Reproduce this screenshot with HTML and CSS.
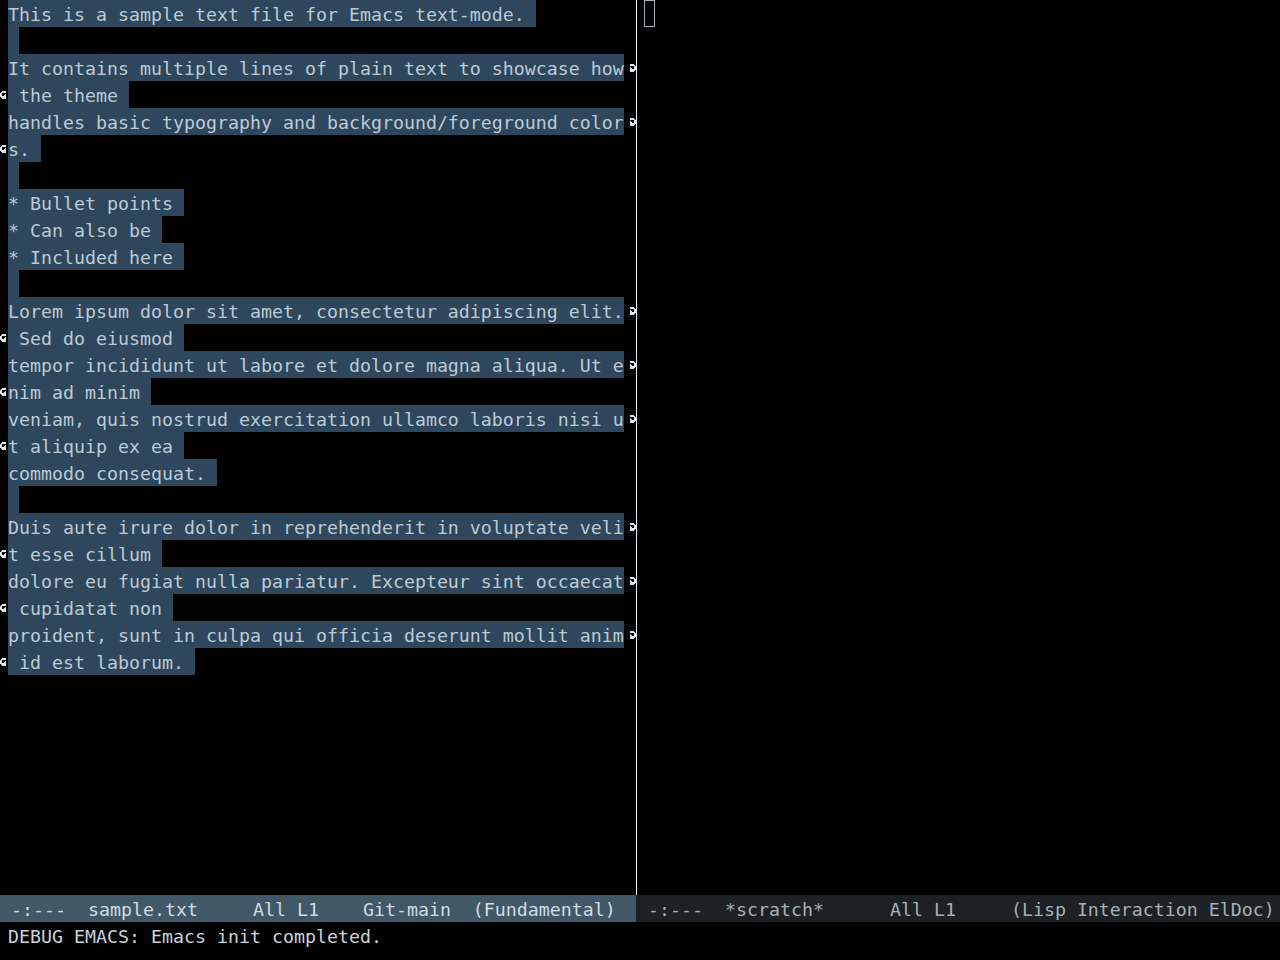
FILE: index.html
```html
<!doctype html>
<html lang="en">
  <head>
    <meta charset="UTF-8" />
    <title>Emacs - sample.txt</title>
    <link rel="stylesheet" href="styles.css">
  </head>
  <body>
    <svg class="defs" width="0" height="0">
      <symbol id="larr" viewBox="0 0 8 8">
        <path d="M2 0h4v1H2zM1 1h5v1H1zM0 2h2v1H0zM0 3h2v1H0zM5 3h1v1H5zM0 4h2v1H0zM4 4h2v1H4zM0 5h6v1H0zM1 6h5v1H1zM2 7h4v1H2z"/>
      </symbol>
      <symbol id="rarr" viewBox="0 0 8 8">
        <path d="M2 0h4v1H2zM2 1h5v1H2zM6 2h2v1H6zM6 3h2v1H6zM2 3h1v1H2zM6 4h2v1H6zM2 4h2v1H2zM2 5h6v1H2zM2 6h5v1H2zM2 7h4v1H2z"/>
      </symbol>
    </svg>

    <div class="frame">
      <div class="windows">
        <div class="window left">
          <div class="body">
            <div class="row"><span class="lf"></span><span class="txt"><span class="sel nl">This is a sample text file for Emacs text-mode.</span></span><span class="rf"></span></div>
            <div class="row"><span class="lf"></span><span class="txt"><span class="sel nl"></span></span><span class="rf"></span></div>
            <div class="row"><span class="lf"></span><span class="txt"><span class="sel">It contains multiple lines of plain text to showcase how</span></span><span class="rf"><svg><use href="#rarr"/></svg></span></div>
            <div class="row"><span class="lf"><svg><use href="#larr"/></svg></span><span class="txt"><span class="sel nl"> the theme</span></span><span class="rf"></span></div>
            <div class="row"><span class="lf"></span><span class="txt"><span class="sel">handles basic typography and background/foreground color</span></span><span class="rf"><svg><use href="#rarr"/></svg></span></div>
            <div class="row"><span class="lf"><svg><use href="#larr"/></svg></span><span class="txt"><span class="sel nl">s.</span></span><span class="rf"></span></div>
            <div class="row"><span class="lf"></span><span class="txt"><span class="sel nl"></span></span><span class="rf"></span></div>
            <div class="row"><span class="lf"></span><span class="txt"><span class="sel nl">* Bullet points</span></span><span class="rf"></span></div>
            <div class="row"><span class="lf"></span><span class="txt"><span class="sel nl">* Can also be</span></span><span class="rf"></span></div>
            <div class="row"><span class="lf"></span><span class="txt"><span class="sel nl">* Included here</span></span><span class="rf"></span></div>
            <div class="row"><span class="lf"></span><span class="txt"><span class="sel nl"></span></span><span class="rf"></span></div>
            <div class="row"><span class="lf"></span><span class="txt"><span class="sel">Lorem ipsum dolor sit amet, consectetur adipiscing elit.</span></span><span class="rf"><svg><use href="#rarr"/></svg></span></div>
            <div class="row"><span class="lf"><svg><use href="#larr"/></svg></span><span class="txt"><span class="sel nl"> Sed do eiusmod</span></span><span class="rf"></span></div>
            <div class="row"><span class="lf"></span><span class="txt"><span class="sel">tempor incididunt ut labore et dolore magna aliqua. Ut e</span></span><span class="rf"><svg><use href="#rarr"/></svg></span></div>
            <div class="row"><span class="lf"><svg><use href="#larr"/></svg></span><span class="txt"><span class="sel nl">nim ad minim</span></span><span class="rf"></span></div>
            <div class="row"><span class="lf"></span><span class="txt"><span class="sel">veniam, quis nostrud exercitation ullamco laboris nisi u</span></span><span class="rf"><svg><use href="#rarr"/></svg></span></div>
            <div class="row"><span class="lf"><svg><use href="#larr"/></svg></span><span class="txt"><span class="sel nl">t aliquip ex ea</span></span><span class="rf"></span></div>
            <div class="row"><span class="lf"></span><span class="txt"><span class="sel nl">commodo consequat.</span></span><span class="rf"></span></div>
            <div class="row"><span class="lf"></span><span class="txt"><span class="sel nl"></span></span><span class="rf"></span></div>
            <div class="row"><span class="lf"></span><span class="txt"><span class="sel">Duis aute irure dolor in reprehenderit in voluptate veli</span></span><span class="rf"><svg><use href="#rarr"/></svg></span></div>
            <div class="row"><span class="lf"><svg><use href="#larr"/></svg></span><span class="txt"><span class="sel nl">t esse cillum</span></span><span class="rf"></span></div>
            <div class="row"><span class="lf"></span><span class="txt"><span class="sel">dolore eu fugiat nulla pariatur. Excepteur sint occaecat</span></span><span class="rf"><svg><use href="#rarr"/></svg></span></div>
            <div class="row"><span class="lf"><svg><use href="#larr"/></svg></span><span class="txt"><span class="sel nl"> cupidatat non</span></span><span class="rf"></span></div>
            <div class="row"><span class="lf"></span><span class="txt"><span class="sel">proident, sunt in culpa qui officia deserunt mollit anim</span></span><span class="rf"><svg><use href="#rarr"/></svg></span></div>
            <div class="row"><span class="lf"><svg><use href="#larr"/></svg></span><span class="txt"><span class="sel nl"> id est laborum.</span></span><span class="rf"></span></div>
          </div>
          <div class="modeline active">-:---  sample.txt     All L1    Git-main  (Fundamental)</div>
        </div>

        <div class="window right">
          <div class="body">
            <div class="row"><span class="lf"></span><span class="txt"><span class="cursor"></span></span></div>
          </div>
          <div class="modeline inactive">-:---  *scratch*      All L1     (Lisp Interaction ElDoc)</div>
        </div>
      </div>

      <div class="echo">DEBUG EMACS: Emacs init completed.</div>
    </div>
  </body>
</html>
```

FILE: styles.css
```css
body {
  margin: 0;
  background: #000;
  color: #bccad5;
  font-family: "DejaVu Sans Mono", monospace;
  font-size: 18.27px;
  line-height: 27px;
}
.defs {
  position: absolute;
}
.frame {
  width: 1280px;
  height: 960px;
  display: flex;
  flex-direction: column;
  overflow: hidden;
}
.windows {
  display: flex;
  height: 922px;
}
.window {
  display: flex;
  flex-direction: column;
}
.window.left {
  width: 636px;
}
.window.right {
  flex: 1;
}
.body {
  flex: 1;
  overflow: hidden;
}
.right .body {
  border-left: 1px solid #e4ecf1;
}
.row {
  display: flex;
  height: 27px;
}
.lf {
  width: 8px;
  flex: none;
  display: flex;
  align-items: center;
}
.right .lf {
  width: 7px;
}
.txt {
  width: 620px;
  flex: none;
  white-space: pre;
  line-height: 29px;
}
.rf {
  width: 8px;
  flex: none;
  display: flex;
  align-items: center;
}
.lf svg,
.rf svg {
  width: 8px;
  height: 8px;
  fill: #dde8f0;
}
.sel {
  display: inline-block;
  height: 27px;
  vertical-align: top;
  background: #2e475c;
}
.sel.nl {
  padding-right: 11px;
}
.cursor {
  display: inline-block;
  box-sizing: border-box;
  width: 11px;
  height: 27px;
  vertical-align: top;
  border: 1px solid #a3adb5;
}

/* mode lines */
.modeline {
  height: 27px;
  line-height: 29px;
  white-space: pre;
  flex: none;
  overflow: hidden;
}
.modeline.active {
  background: #405868;
  color: #d2dce3;
  padding-left: 11px;
}
.modeline.inactive {
  background: #1d2024;
  color: #a6b0b8;
  padding-left: 12px;
}
.echo {
  height: 38px;
  padding-left: 8px;
  white-space: pre;
  color: #c9d3da;
  line-height: 29px;
}
```
